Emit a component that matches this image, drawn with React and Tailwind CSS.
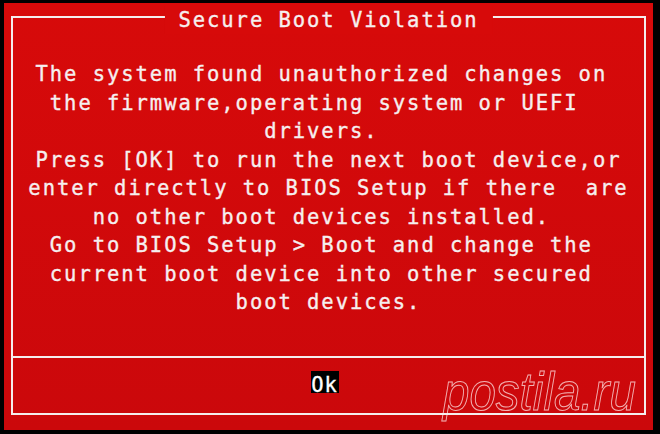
import React from 'react';

const lines = [
  'The system found unauthorized changes on ',
  'the firmware,operating system or UEFI  ',
  'drivers. ',
  'Press [OK] to run the next boot device,or',
  'enter directly to BIOS Setup if there  are',
  'no other boot devices installed. ',
  'Go to BIOS Setup > Boot and change the ',
  'current boot device into other secured ',
  'boot devices.',
];

const mono = "font-['DejaVu_Sans_Mono',monospace]";

export default function App() {
  return (
    <div className="relative w-[660px] h-[434px] bg-black pt-[3px] pl-[4px] overflow-hidden">
      {/* red screen */}
      <div className="w-[649px] h-[427px] bg-linear-to-b from-[#d70a0a] to-[#cb080b] pt-[13px] px-[7px]">
        {/* dialog frame */}
        <div className={`relative h-[399px] border-2 border-[#f5eded] flex flex-col text-[#f6efef] text-[20.5px] tracking-[1.95px] [-webkit-text-stroke:0.35px_#f6efef] ${mono}`}>
          {/* title over the top line */}
          <div className="absolute -top-[12px] left-1/2 -translate-x-1/2 bg-[#d70a0a] px-[14px] leading-[28px] whitespace-pre">
            Secure Boot Violation
          </div>

          <div className="h-[338px] pt-[42px] flex flex-col items-center">
            {lines.map((l, i) => (
              <div key={i} className="leading-[28.5px] whitespace-pre text-center">
                {l}
              </div>
            ))}
          </div>

          <div className="border-t-2 border-[#f5eded] flex-1 flex justify-center pt-[13px]">
            <div className="mr-[8px] w-[28px] h-[22px] bg-black text-white leading-[15px] tracking-normal flex items-end justify-center [-webkit-text-stroke:0.35px_white]">
              <span className="tracking-[1px]">Ok</span>
            </div>
          </div>
        </div>
      </div>

      {/* watermark */}
      <div className="absolute left-[443px] top-[364px] origin-left scale-x-[0.88] text-[54px] leading-none italic font-['Liberation_Sans',sans-serif] text-transparent [-webkit-text-stroke:1px_rgba(255,235,235,0.75)] whitespace-pre">
        postila.ru
      </div>
    </div>
  );
}
